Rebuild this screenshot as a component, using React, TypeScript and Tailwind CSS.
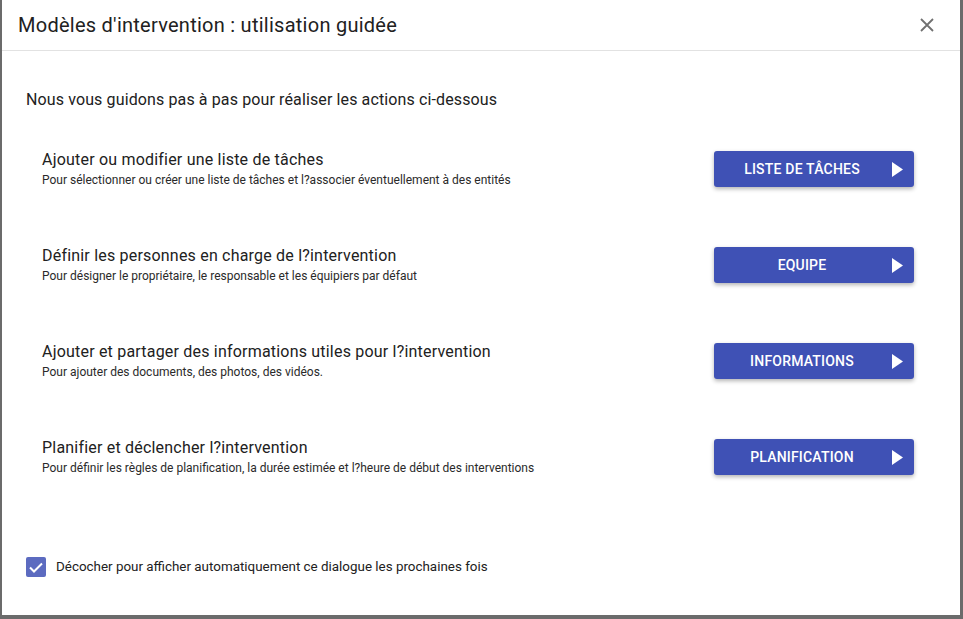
import React from "react";

var STEPS = [
  {
    title: "Ajouter ou modifier une liste de tâches",
    sub: "Pour sélectionner ou créer une liste de tâches et l?associer éventuellement à des entités",
    btn: "Liste de tâches",
  },
  {
    title: "Définir les personnes en charge de l?intervention",
    sub: "Pour désigner le propriétaire, le responsable et les équipiers par défaut",
    btn: "Equipe",
  },
  {
    title: "Ajouter et partager des informations utiles pour l?intervention",
    sub: "Pour ajouter des documents, des photos, des vidéos.",
    btn: "Informations",
  },
  {
    title: "Planifier et déclencher l?intervention",
    sub: "Pour définir les règles de planification, la durée estimée et l?heure de début des interventions",
    btn: "Planification",
  },
];

function StepRow({ step }: { step: (typeof STEPS)[number] }) {
  return (
    <div className="flex items-center justify-between pl-[40px] pr-[46px]">
      <div>
        <div className="text-[16px] leading-[20px] tracking-[0.2px] text-[#212121]">{step.title}</div>
        <div className="mt-[2px] text-[12px] leading-[16px] text-[#2a2a2a]">{step.sub}</div>
      </div>
      <button className="flex h-[36px] w-[200px] items-center gap-[18px] rounded-[3px] bg-[#3f51b5] pl-4 pr-[11px] text-[14px] font-medium uppercase tracking-[0.2px] text-white shadow-[0_2px_4px_rgba(0,0,0,0.3)]">
        <span className="flex-1 text-center">{step.btn}</span>
        <svg width="11" height="15" viewBox="0 0 11 15">
          <path d="M0 0 L11 7.5 L0 15 Z" fill="#fff" />
        </svg>
      </button>
    </div>
  );
}

export default function App() {
  return (
    <div className="h-[619px] w-[963px] overflow-hidden bg-[#6b6b6b] font-['Roboto',sans-serif]">
      <div className="ml-[2px] flex h-[615px] w-[958px] flex-col bg-white">
        {/* Header */}
        <div className="flex h-[51px] items-center justify-between border-b border-[#e2e2e2] pl-[16px] pr-[26px]">
          <h1 className="text-[20px] tracking-[0.26px] text-[#212121]">Modèles d'intervention : utilisation guidée</h1>
          <svg width="14" height="14" viewBox="0 0 14 14">
            <path d="M1 1 L13 13 M13 1 L1 13" stroke="#707070" strokeWidth="1.8" />
          </svg>
        </div>

        {/* Body */}
        <div className="pt-[37px]">
          <p className="pl-[24px] text-[16px] leading-[24px] tracking-[0.12px] text-[#212121]">
            Nous vous guidons pas à pas pour réaliser les actions ci-dessous
          </p>
          <div className="mt-[38px] flex flex-col gap-[58px]">
            {STEPS.map(function (s) {
              return <StepRow key={s.btn} step={s} />;
            })}
          </div>

          <label className="mt-[81px] flex items-center gap-[10px] pl-[24px]">
            <span className="flex h-[20px] w-[20px] items-center justify-center rounded-[2px] bg-[#5c6bc0]">
              <svg width="14" height="11" viewBox="0 0 14 11">
                <path d="M1 5.5 L5 9.5 L13 1.5" stroke="#fff" strokeWidth="2" fill="none" />
              </svg>
            </span>
            <span className="text-[13.4px] text-[#212121]">
              Décocher pour afficher automatiquement ce dialogue les prochaines fois
            </span>
          </label>
        </div>
      </div>
    </div>
  );
}
